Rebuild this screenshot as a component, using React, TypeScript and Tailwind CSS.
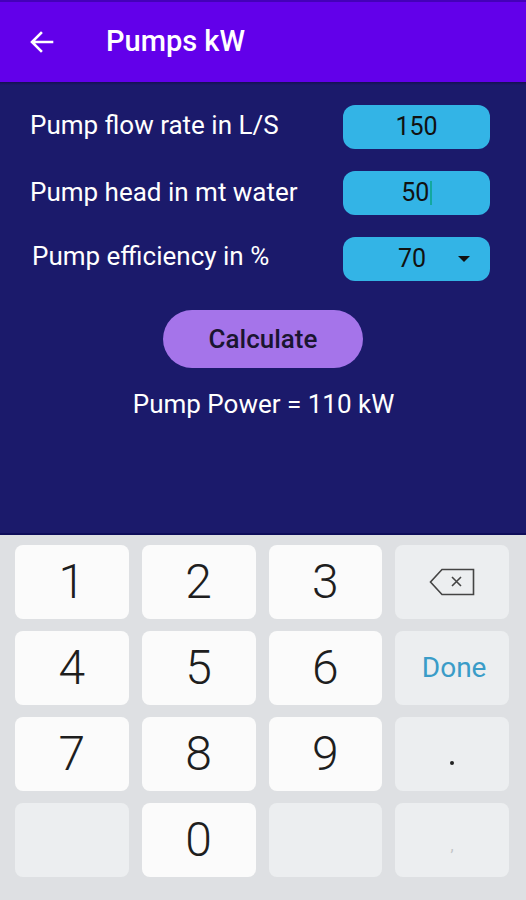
import React from "react";

const font = { fontFamily: "Roboto, 'Noto Sans', sans-serif" };

function Key({ children, fn = false }: { children?: React.ReactNode; fn?: boolean }) {
  return (
    <div
      className={`h-[74px] rounded-[8px] flex items-center justify-center ${fn ? "bg-[#eceef0]" : "bg-[#fbfbfb]"}`}
    >
      {children}
    </div>
  );
}

function Digit({ d }: { d: string }) {
  return (
    <Key>
      <span className="text-[48px] font-light text-[#1e1e1e] leading-none">{d}</span>
    </Key>
  );
}

export default function App() {
  return (
    <div className="w-[526px] h-[900px] overflow-hidden flex flex-col bg-[#1b1a6b]" style={font}>
      <div className="h-[2px] bg-[#4400b8]" />
      <div className="h-[80px] bg-[#6200ea] flex items-center">
        <svg className="ml-[30px]" width="24" height="22" viewBox="0 0 24 22" fill="none">
          <path d="M22 11H3M11 2L2 11L11 20" stroke="white" strokeWidth="2.6" strokeLinecap="square" />
        </svg>
        <span className="ml-[52px] text-white text-[29px] font-medium">Pumps kW</span>
      </div>
      <div className="h-[3px] bg-gradient-to-b from-[#141052] to-[#1b1a6b]" />
      <div className="flex-1 flex flex-col">
        <div className="flex flex-col gap-[22px] pt-[20px]">
          <div className="flex items-center h-[44px]">
            <span className="ml-[30px] text-white text-[26px] -mt-[3px]">Pump flow rate in L/S</span>
            <div className="ml-auto mr-[36px] w-[147px] h-[44px] rounded-[12px] bg-[#33b4e6] flex items-center justify-center">
              <span className="text-[25px] text-[#111]">150</span>
            </div>
          </div>
          <div className="flex items-center h-[44px]">
            <span className="ml-[30px] text-white text-[26px] -mt-[2px]">Pump head in mt water</span>
            <div className="ml-auto mr-[36px] w-[147px] h-[44px] rounded-[12px] bg-[#33b4e6] flex items-center justify-center">
              <span className="text-[25px] text-[#111]">50</span>
              <span className="w-[1.5px] h-[24px] bg-[#13a89e] ml-[1px]" />
            </div>
          </div>
          <div className="flex items-center h-[44px]">
            <span className="ml-[32px] text-white text-[26px] -mt-[5px]">Pump efficiency in %</span>
            <div className="ml-auto mr-[36px] w-[147px] h-[44px] rounded-[12px] bg-[#33b4e6] flex items-center relative">
              <span className="absolute left-[55px] text-[25px] text-[#111]">70</span>
              <svg className="absolute left-[115px]" width="12" height="6" viewBox="0 0 12 6">
                <path d="M0 0H12L6 6Z" fill="#111" />
              </svg>
            </div>
          </div>
        </div>
        <div className="flex justify-center mt-[29px]">
          <div className="w-[200px] h-[58px] rounded-full bg-[#a574ea] flex items-center justify-center">
            <span className="text-[26px] font-medium text-[#1a1530]">Calculate</span>
          </div>
        </div>
        <div className="text-center text-white text-[26px] mt-[17px] ml-[1px]">Pump Power = 110 kW</div>
      </div>
      <div className="h-[2px] bg-[#0e0d5a]" />
      <div className="h-[365px] bg-[#dee0e3] pt-[10px] pl-[15px] pr-[17px]">
        <div className="grid grid-cols-4 gap-x-[13px] gap-y-[12px]">
          <Digit d="1" />
          <Digit d="2" />
          <Digit d="3" />
          <Key fn>
            <svg width="46" height="28" viewBox="0 0 46 28" fill="none">
              <path d="M13 1.5H44.5V26.5H13L1.5 14Z" stroke="#444" strokeWidth="1.6" strokeLinejoin="miter" />
              <path d="M23 9L32 18M32 9L23 18" stroke="#444" strokeWidth="1.6" />
            </svg>
          </Key>
          <Digit d="4" />
          <Digit d="5" />
          <Digit d="6" />
          <Key fn>
            <span className="text-[28px] text-[#3a9cc8] ml-[4px]">Done</span>
          </Key>
          <Digit d="7" />
          <Digit d="8" />
          <Digit d="9" />
          <Key fn>
            <span className="w-[4px] h-[4px] rounded-full bg-[#222] mt-[18px]" />
          </Key>
          <Key fn />
          <Digit d="0" />
          <Key fn />
          <Key fn>
            <span className="text-[16px] text-[#c2c4c6] mt-[12px]">,</span>
          </Key>
        </div>
      </div>
    </div>
  );
}
